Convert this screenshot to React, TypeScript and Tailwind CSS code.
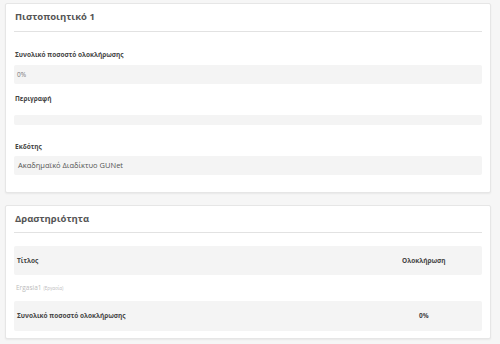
export default function App() {
  return (
    <div
      className="min-h-[344px] w-[500px] bg-[#f6f6f6] pl-[5px] pr-[9px] pt-[3px] text-[#444]"
      style={{ fontFamily: '"Open Sans", "Noto Sans", sans-serif' }}
    >
      <div className="h-[190px] rounded-[2px] border border-[#e6e6e6] bg-white px-[8px] shadow-[0_1px_2px_rgba(0,0,0,0.06)]">
        <div className="flex h-[27px] items-center pl-[1px] text-[9.5px] font-bold text-[#555]">
          Πιστοποιητικό 1
        </div>
        <div className="border-b border-[#e2e2e2]"></div>

        <div className="pl-[1px] pt-[18px] text-[6.5px] font-bold leading-[10px] text-[#444]">Συνολικό ποσοστό ολοκλήρωσης</div>
        <div className="mt-[5px] flex h-[19px] items-center rounded-[2px] bg-[#f4f4f4] pl-[3px] text-[6.5px] text-[#777]">0%</div>

        <div className="pl-[1px] pt-[10px] text-[6.5px] font-bold leading-[10px] text-[#444]">Περιγραφή</div>
        <div className="mt-[11px] h-[10px] rounded-[2px] bg-[#f4f4f4]"></div>

        <div className="pl-[1px] pt-[17px] text-[6.5px] font-bold leading-[10px] text-[#444]">Εκδότης</div>
        <div className="mt-[4px] flex h-[19px] items-center rounded-[2px] bg-[#f4f4f4] pl-[4px] text-[7.5px] text-[#555]">
          Ακαδημαϊκό Διαδίκτυο GUNet
        </div>
      </div>

      <div className="mt-[12px] h-[134px] rounded-[2px] border border-[#e6e6e6] bg-white px-[8px] shadow-[0_1px_2px_rgba(0,0,0,0.06)]">
        <div className="flex h-[26px] items-center pl-[1px] text-[9.5px] font-bold text-[#555]">
          Δραστηριότητα
        </div>
        <div className="border-b border-[#e2e2e2]"></div>

        <div className="mt-[13px] flex h-[29px] items-center rounded-[2px] bg-[#f4f4f4] pl-[3px] text-[6.5px] font-bold text-[#444]">
          <div className="flex-1">Τίτλος</div>
          <div className="w-[80px]">Ολοκλήρωση</div>
        </div>
        <div className="flex h-[26px] items-center pl-[2px] text-[6.5px] text-[#bbb]">
          Ergasia1 <span className="ml-[2px] text-[4.5px]">(Εργασία)</span>
        </div>
        <div className="flex h-[30px] items-center rounded-[2px] bg-[#f4f4f4] pl-[3px] text-[6.5px] font-bold text-[#444]">
          <div className="flex-1">Συνολικό ποσοστό ολοκλήρωσης</div>
          <div className="w-[63px]">0%</div>
        </div>
      </div>
    </div>
  )
}
